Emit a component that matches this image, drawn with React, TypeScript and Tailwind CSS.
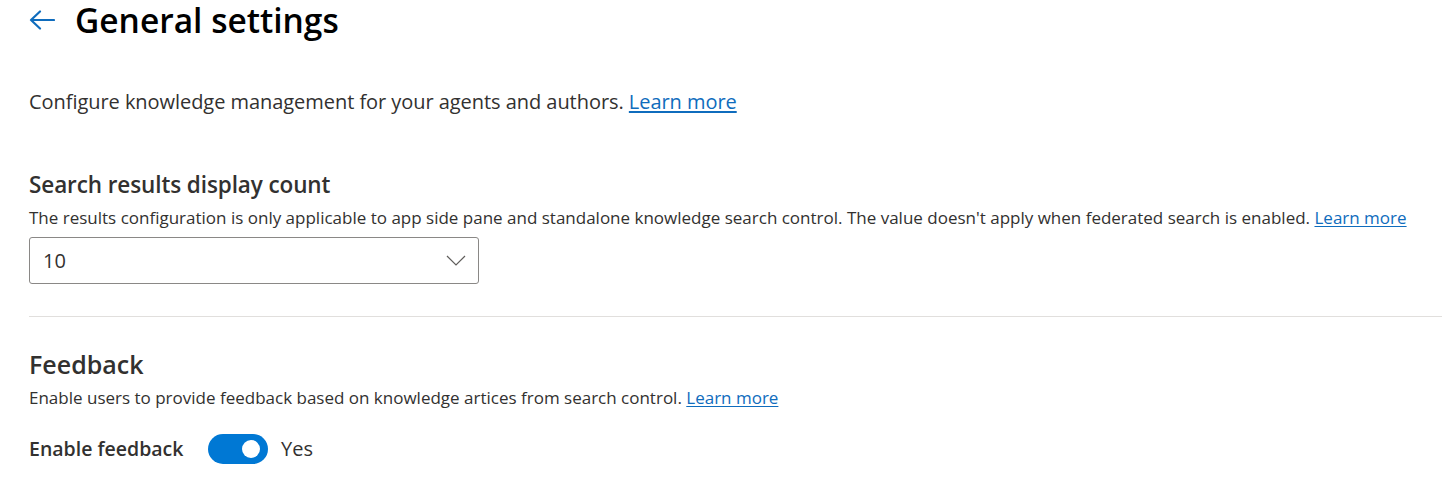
import React, { useState } from 'react'

const font = { fontFamily: '"Open Sans", "Noto Sans", sans-serif' }

const LearnMore = () => (
  <a href="#" className="text-[#0f6cbd] underline underline-offset-2">Learn more</a>
)

const App = () => {
  const [enabled, setEnabled] = useState(true)
  return (
    <div style={font} className="w-[1442px] h-[486px] bg-white text-[#323130] overflow-hidden">
      <div className="flex items-center h-10 pl-[29px]">
        <svg width="26" height="20" viewBox="0 0 26 20" className="shrink-0">
          <path d="M25 10H2M11 1.5 2 10l9 8.5" fill="none" stroke="#0f6cbd" strokeWidth="2.2" strokeLinecap="round" strokeLinejoin="round" />
        </svg>
        <h1 className="ml-[20px] text-[33.5px] font-semibold text-black leading-10">General settings</h1>
      </div>

      <p className="mt-12 pl-[29px] text-[20px] leading-7 tracking-[-0.05px]">
        Configure knowledge management for your agents and authors. <LearnMore />
      </p>

      <div className="mt-[54px] pl-[29px]">
        <h2 className="text-[22.5px] font-semibold leading-[30px] tracking-[-0.1px]">Search results display count</h2>
        <p className="mt-[7px] text-[17px] leading-[22px]">
          The results configuration is only applicable to app side pane and standalone knowledge search control. The value doesn't apply when federated search is enabled. <LearnMore />
        </p>
        <div className="mt-2 w-[450px] h-[47px] border border-[#8a8886] rounded-[3px] flex items-center justify-between pl-[13px] pr-[12px]">
          <span className="text-[20px]">10</span>
          <svg width="20" height="12" viewBox="0 0 20 12">
            <path d="M1 1l9 9 9-9" fill="none" stroke="#605e5c" strokeWidth="1.2" />
          </svg>
        </div>
      </div>

      <div className="mt-[32px] ml-[29px] h-px bg-[#e1dfdd]" />

      <div className="mt-[29px] pl-[29px]">
        <h2 className="text-[25px] font-semibold leading-9">Feedback</h2>
        <p className="mt-[5px] text-[17px] leading-[22px]">
          Enable users to provide feedback based on knowledge artices from search control. <LearnMore />
        </p>
        <div className="mt-[25px] flex items-center h-[30px]">
          <span className="text-[19.5px] font-semibold w-[179px]">Enable feedback</span>
          <button
            onClick={() => setEnabled(!enabled)}
            className={`w-[60px] h-[30px] rounded-full flex items-center px-[8px] ${enabled ? 'bg-[#0078d4] justify-end' : 'bg-white border border-[#605e5c] justify-start'}`}
          >
            <span className="w-[18px] h-[18px] rounded-full bg-white" />
          </button>
          <span className="ml-[13px] text-[20px]">{enabled ? 'Yes' : 'No'}</span>
        </div>
      </div>
    </div>
  )
}

export default App
